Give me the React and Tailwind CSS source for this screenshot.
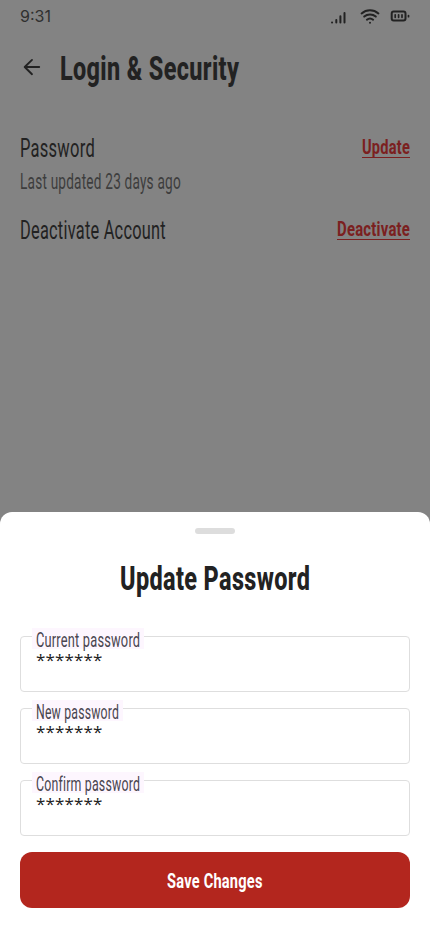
import { useLayoutEffect, useRef, useState } from "react";

// Squeezes a line of text horizontally so that it fills its container's width.
function Condensed({ children, className = "" }) {
  const box = useRef(null);
  const text = useRef(null);
  const [scale, setScale] = useState(1);
  useLayoutEffect(() => {
    const fit = () => setScale(box.current.clientWidth / text.current.offsetWidth);
    fit();
    document.fonts.ready.then(fit);
  }, []);
  return (
    <span ref={box} className={`flex items-center whitespace-nowrap font-['Roboto',sans-serif] tracking-[0.015em] ${className}`}>
      <span ref={text} className="block shrink-0 origin-left" style={{ transform: `scaleX(${scale})` }}>
        {children}
      </span>
    </span>
  );
}

function StatusBar() {
  return (
    <div className="flex h-8 items-center justify-between pl-5 pr-[19px] text-[#222]">
      <span className="font-['Inter',sans-serif] text-base leading-8 text-[#303030]">9:31</span>
      <div className="flex h-8 items-center">
        <svg width="80" height="32" viewBox="331 0 80 32" fill="none" stroke="currentColor" strokeLinecap="round">
          <g strokeWidth="2">
            <path d="M332 22.5h.1M336.3 22.5v-2.4M340.4 22.5v-6.2M344.5 22.5v-9.4" />
          </g>
          <g strokeWidth="2">
            <path d="M361.6 13.4a12.6 12.6 0 0 1 16.8 0M364.2 16.6a8.8 8.8 0 0 1 11.6 0M366.9 19.7a4.9 4.9 0 0 1 6.2 0M370 22.7h.01" />
          </g>
          <rect x="391.7" y="11.6" width="13.8" height="8.9" rx="2" strokeWidth="2" />
          <path d="M395.2 14.8v2.5M398.6 14.8v2.5M402 14.8v2.5M408.5 15.5v1.2" strokeWidth="1.7" />
        </svg>
      </div>
    </div>
  );
}

function Field({ label, labelWidth }) {
  return (
    <div className="relative h-14 rounded-[4px] border border-[#dedede]">
      <div className="absolute -top-[9px] left-[11px] flex h-[21px] items-center bg-[#fdf6fe] px-1">
        <Condensed className={`h-[21px] pt-[4px] text-[19.5px] leading-[17px] text-[#49454f] ${labelWidth}`}>{label}</Condensed>
      </div>
      <div className="pl-[15px] pt-[16px] font-['Open_Sans',sans-serif] text-[17px] font-medium leading-[14px] tracking-[0.15px] text-[#222]">*******</div>
    </div>
  );
}

export default function App() {
  return (
    <div className="flex h-[932px] w-[430px] flex-col overflow-hidden bg-[#838383]">
      <StatusBar />
      <header className="flex h-[72px] items-center gap-[18px] pl-[22px]">
        <svg width="20" height="20" viewBox="0 0 20 20" fill="none" stroke="#222" strokeWidth="1.9" strokeLinecap="round" strokeLinejoin="round">
          <path d="M17.2 9H3M10 1.9L2.7 9L10 16.2" />
        </svg>
        <Condensed className="h-10 w-[179px] text-[34px] font-extrabold text-[#222]">Login &amp; Security</Condensed>
      </header>
      <main className="flex flex-1 flex-col px-5 pt-7 text-[#222]">
        <div className="flex items-start justify-between">
          <div>
            <Condensed className="h-8 w-[75px] text-[26px]">Password</Condensed>
            <Condensed className="h-8 w-[161px] pt-[2px] text-[22px] text-[#3d3d3d]">Last updated 23 days ago</Condensed>
          </div>
          <Condensed className="mt-1 h-[22px] w-12 border-b border-[#7b2020] pt-[2px] text-[21px] font-bold text-[#7b2020]">Update</Condensed>
        </div>
        <div className="mt-[18px] flex items-start justify-between">
          <Condensed className="h-8 w-[146px] text-[26px]">Deactivate Account</Condensed>
          <Condensed className="mt-1 h-[22px] w-[73px] border-b border-[#7b2020] pt-[2px] text-[21px] font-bold text-[#7b2020]">Deactivate</Condensed>
        </div>
      </main>
      <section className="flex h-[420px] flex-col rounded-t-[12px] bg-white px-5 pt-4">
        <div className="mx-auto h-[6px] w-10 rounded-full bg-[#ddd]" />
        <h2 className="mx-auto mt-6">
          <Condensed className="h-10 w-[190px] text-[34px] font-extrabold text-[#222]">Update Password</Condensed>
        </h2>
        <form className="mt-[38px] flex flex-col gap-4">
          <Field label="Current password" labelWidth="w-[104px]" />
          <Field label="New password" labelWidth="w-[83px]" />
          <Field label="Confirm password" labelWidth="w-[104px]" />
          <button type="button" className="flex h-14 items-center justify-center rounded-[12px] bg-[#b3261e]">
            <Condensed className="h-8 w-[96px] pt-[3px] text-[21px] font-bold text-white">Save Changes</Condensed>
          </button>
        </form>
      </section>
    </div>
  );
}
